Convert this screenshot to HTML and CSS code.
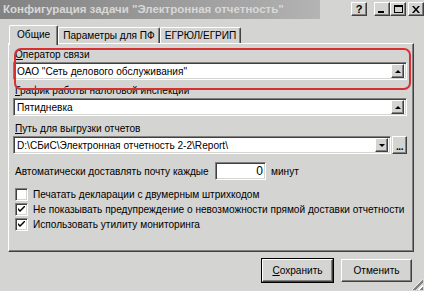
FILE: index.html
```html
<!DOCTYPE html>
<html>
<head>
<meta charset="utf-8">
<title>Конфигурация задачи</title>
<link rel="stylesheet" href="styles.css">
</head>
<body>
<div class="window">
  <div class="titlebar">
    <div class="caption">Конфигурация задачи "Электронная отчетность"</div>
    <div class="caption-btns">
      <span class="cbtn help">?</span>
      <span class="cbtn-group">
        <span class="cbtn"><span class="ico-min"></span></span>
        <span class="cbtn"><span class="ico-max"></span></span>
      </span>
      <span class="cbtn close">
        <svg width="8" height="7" viewBox="0 0 8 7"><path d="M0 0h2l2 2.5 2-2.5h2l-3 3.5 3 3.5h-2l-2-2.5-2 2.5h-2l3-3.5z" fill="#000"/></svg>
      </span>
    </div>
  </div>

  <div class="tabs">
    <div class="tab active">Общие</div>
    <div class="tab">Параметры для ПФ</div>
    <div class="tab">ЕГРЮЛ/ЕГРИП</div>
  </div>

  <div class="panel">
    <div class="highlight"></div>

    <div class="label"><u>О</u>ператор связи</div>
    <div class="field">
      <span class="value">ОАО "Сеть делового обслуживания"</span>
      <span class="fbtn"><span class="tri-up"></span></span>
    </div>

    <div class="label"><u>Г</u>рафик работы налоговой инспекции</div>
    <div class="field spaced">
      <span class="value">Пятидневка</span>
      <span class="fbtn"><span class="tri-up"></span></span>
    </div>

    <div class="label"><u>П</u>уть для выгрузки отчетов</div>
    <div class="path-row">
      <div class="field">
        <span class="value">D:\СБиС\Электронная отчетность 2-2\Report\</span>
        <span class="fbtn"><span class="tri-down"></span></span>
      </div>
      <span class="browse">...</span>
    </div>

    <div class="interval">
      <span class="interval-text">Автоматически доставлять почту каждые</span>
      <span class="num">0</span>
      <span>минут</span>
    </div>

    <div class="checks">
      <label class="check"><span class="box"></span>Печатать декларации с двумерным штрихкодом</label>
      <label class="check"><span class="box"><svg width="7" height="7" viewBox="0 0 7 7"><path d="M0 2v2l2 2 5-5v-2l-5 5z" fill="#000"/></svg></span>Не показывать предупреждение о невозможности прямой доставки отчетности</label>
      <label class="check"><span class="box"><svg width="7" height="7" viewBox="0 0 7 7"><path d="M0 2v2l2 2 5-5v-2l-5 5z" fill="#000"/></svg></span>Использовать утилиту мониторинга</label>
    </div>
  </div>

  <div class="actions">
    <span class="btn default"><u>С</u>охранить</span>
    <span class="btn">Отменить</span>
  </div>
  <div class="grip"></div>
</div>
</body>
</html>
```

FILE: styles.css
```css
body {
    margin: 0;
    background: #d4d4d2;
    font-family: "Liberation Sans", Arial, sans-serif;
    font-size: 10.1px;
    color: #000;
}
.window {
    position: relative;
    width: 424px;
    height: 291px;
    overflow: hidden;
}
u { text-decoration: underline; text-underline-offset: 1px; }

/* title bar */
.titlebar {
    display: flex;
    height: 19px;
}
.caption {
    width: 320px;
    padding-left: 3px;
    line-height: 18px;
    font-size: 11.5px;
    font-weight: bold;
    color: #d8d8d8;
    background: linear-gradient(to right, #828282, #a8a8a8 80%, #b4b4b4);
    white-space: nowrap;
}
.caption-btns {
    flex: 1;
    display: flex;
    align-items: flex-start;
    padding-top: 2px;
    padding-left: 31px;
    gap: 2px;
}
.cbtn-group { display: flex; margin-left: 5px; }
.cbtn {
    width: 14px;
    height: 12px;
    display: flex;
    align-items: center;
    justify-content: center;
    background: #d4d4d2;
    border: 1px solid;
    border-color: #fff #404040 #404040 #fff;
    box-shadow: inset -1px -1px 0 #808080;
    font-weight: bold;
    font-size: 11px;
}
.ico-min { width: 6px; height: 2px; background: #000; margin-top: 6px; margin-right: 2px; }
.ico-max { width: 7px; height: 5px; border: 1px solid #000; border-top-width: 2px; }

/* tabs */
.tabs {
    display: flex;
    align-items: flex-end;
    margin: 6px 0 0 9px;
    height: 18px;
    position: relative;
    z-index: 1;
}
.tab {
    height: 15px;
    line-height: 15px;
    padding: 0 4px;
    border-left: 1px solid #fff;
    border-top: 1px solid #fff;
    border-right: 1px solid #404040;
    box-shadow: inset -1px 0 0 #808080;
    border-radius: 2px 2px 0 0;
    white-space: nowrap;
}
.tab.active {
    height: 19px;
    line-height: 18px;
    padding: 0 7px;
    margin-bottom: -2px;
    background: #d4d4d2;
}

/* panel */
.panel {
    position: relative;
    margin: 0 10px 0 8px;
    height: 209px;
    padding: 5px 6px 0 4px;
    box-sizing: border-box;
    border: 1px solid;
    border-color: #fff #404040 #404040 #fff;
    box-shadow: inset -1px -1px 0 #808080;
}
.highlight {
    position: absolute;
    left: 5px;
    top: 4px;
    width: 393px;
    height: 38px;
    border: 2px solid #d83030;
    border-radius: 7px;
}
.label {
    height: 12px;
    line-height: 12px;
    padding-left: 2px;
    margin-bottom: 1px;
}
.field {
    display: flex;
    align-items: center;
    height: 12px;
    padding: 2px;
    margin-bottom: 5px;
    background: #fff;
    border: 1px solid;
    border-color: #808080 #fff #fff #808080;
    box-shadow: inset 1px 1px 0 #404040, inset -1px -1px 0 #d4d4d2;
}
.field.spaced { margin-bottom: 7px; }
.value { flex: 1; padding-left: 1px; white-space: nowrap; overflow: hidden; }
.fbtn, .browse {
    display: flex;
    align-items: center;
    justify-content: center;
    background: #d4d4d2;
    border: 1px solid;
    border-color: #fff #404040 #404040 #fff;
    box-shadow: inset -1px -1px 0 #808080;
}
.fbtn { width: 11px; height: 12px; }
.tri-up { width: 0; height: 0; border: 3px solid transparent; border-top: 0; border-bottom: 3px solid #000; }
.tri-down { width: 0; height: 0; border: 3px solid transparent; border-bottom: 0; border-top: 3px solid #000; }
.path-row { display: flex; gap: 1px; }
.path-row .field { flex: 1; }
.browse {
    width: 15px;
    height: 18px;
    box-sizing: border-box;
    align-items: flex-end;
    line-height: 12px;
    font-size: 10px;
    font-weight: bold;
    letter-spacing: -0.5px;
}

.interval {
    display: flex;
    align-items: center;
    gap: 5px;
    margin-top: 3px;
    padding-left: 2px;
}
.interval-text { width: 195px; white-space: nowrap; }
.num {
    width: 45px;
    height: 12px;
    line-height: 12px;
    padding: 2px;
    text-align: right;
    background: #fff;
    border: 1px solid;
    border-color: #808080 #fff #fff #808080;
    box-shadow: inset 1px 1px 0 #404040, inset -1px -1px 0 #d4d4d2;
    font-size: 12px;
}

.checks {
    display: flex;
    flex-direction: column;
    gap: 2px;
    margin-top: 8px;
    padding-left: 2px;
}
.check {
    display: flex;
    align-items: center;
    height: 13px;
    gap: 5px;
    white-space: nowrap;
}
.box {
    width: 9px;
    height: 9px;
    display: flex;
    align-items: center;
    justify-content: center;
    background: #fff;
    border: 1px solid;
    border-color: #808080 #fff #fff #808080;
    box-shadow: inset 1px 1px 0 #404040, inset -1px -1px 0 #d4d4d2;
    padding: 1px;
}

/* buttons */
.actions {
    display: flex;
    justify-content: flex-end;
    gap: 8px;
    margin-top: 7px;
    padding-right: 12px;
}
.btn {
    width: 69px;
    height: 21px;
    line-height: 21px;
    text-align: center;
    border: 1px solid;
    border-color: #fff #404040 #404040 #fff;
    box-shadow: inset -1px -1px 0 #808080;
}
.btn.default {
    outline: 1px solid #000;
}
.grip {
    position: absolute;
    right: 1px;
    bottom: 1px;
    width: 11px;
    height: 11px;
    background: repeating-linear-gradient(135deg, transparent 0 2px, #fff 2px 3px, #808080 3px 5px);
    clip-path: polygon(100% 0, 100% 100%, 0 100%);
}
```
